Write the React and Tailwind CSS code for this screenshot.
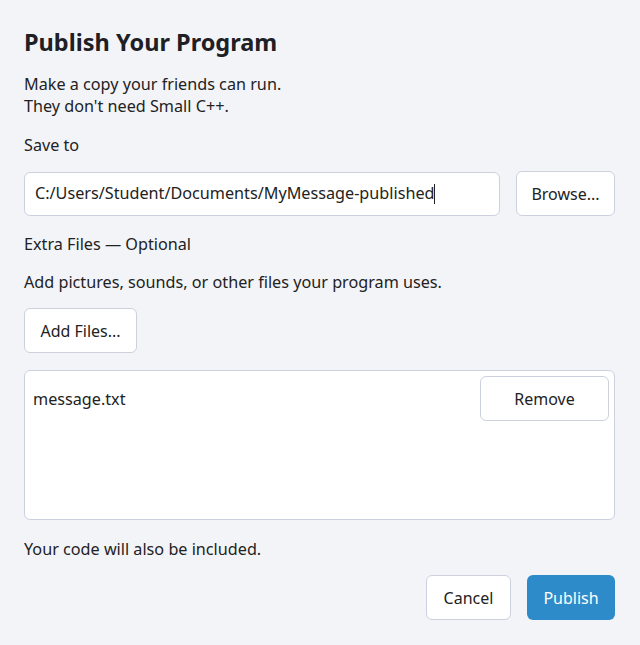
export default function App() {
  const btn =
    "h-[45px] rounded-[6px] border border-[#cdd1dd] bg-white text-[16px] text-[#222] flex items-center justify-center";
  return (
    <div
      className="w-[640px] h-[645px] bg-[#f3f4f8] text-[#222] pl-6 pr-[25px] pt-[27px] flex flex-col text-[16.2px]"
      style={{ fontFamily: '"Noto Sans", sans-serif' }}
    >
      <h1 className="text-[23.5px] font-bold leading-[30px] text-[#1f2024]">Publish Your Program</h1>
      <p className="mt-[16px] leading-[22px]">
        Make a copy your friends can run.
        <br />
        They don't need Small C++.
      </p>
      <p className="mt-[17px] leading-[22px]">Save to</p>
      <div className="mt-[15px] flex items-center gap-4">
        <div className="flex-1 h-[44px] rounded-[6px] border border-[#cdd1dd] bg-white flex items-center px-[10px]">
          <span>C:/Users/Student/Documents/MyMessage-published</span>
          <span className="inline-block w-px h-[20px] bg-[#222]" />
        </div>
        <div className={btn + " w-[99px]"}>Browse...</div>
      </div>
      <p className="mt-[17px] leading-[22px]">Extra Files — Optional</p>
      <p className="mt-[16px] leading-[22px]">
        Add pictures, sounds, or other files your program uses.
      </p>
      <div className="mt-[15px] flex">
        <div className={btn + " w-[113px]"}>Add Files...</div>
      </div>
      <div className="mt-[17px] h-[150px] rounded-[6px] border border-[#cdd1dd] bg-white flex items-start justify-between pl-[8px] pr-[5px] pt-[5px]">
        <span className="mt-[12px] leading-[22px]">message.txt</span>
        <div className={btn + " w-[129px]"}>Remove</div>
      </div>
      <p className="mt-[18px] leading-[22px]">Your code will also be included.</p>
      <div className="mt-[15px] flex justify-end gap-4">
        <div className={btn + " w-[85px]"}>Cancel</div>
        <div className="h-[45px] w-[88px] rounded-[6px] bg-[#2e8bc9] text-white text-[16px] flex items-center justify-center">
          Publish
        </div>
      </div>
    </div>
  );
}
